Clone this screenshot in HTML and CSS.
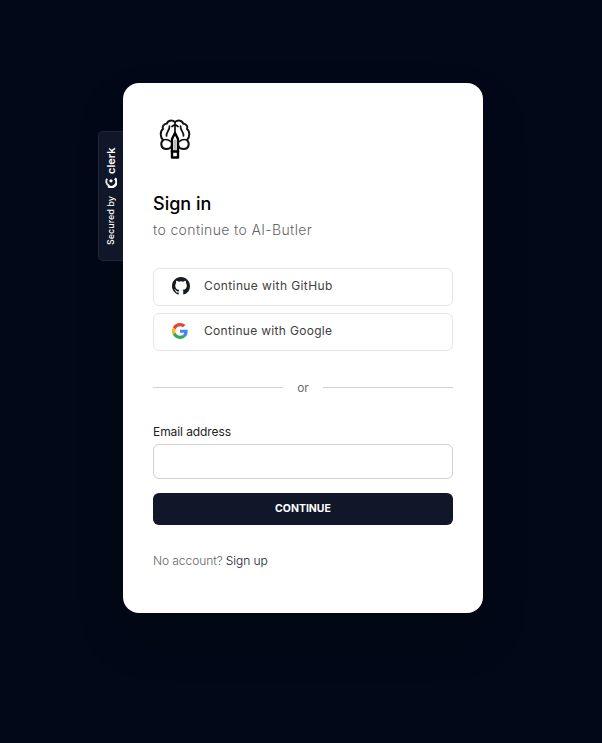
FILE: index.html
```html
<!DOCTYPE html>
<html lang="en">
<head>
<meta charset="utf-8">
<title>Sign in</title>
<link rel="stylesheet" href="styles.css">
</head>
<body>
<main class="card">
  <div class="badge">
    <span class="badge-label">Secured by</span>
    <svg class="badge-mark" viewBox="0 0 24 26" aria-hidden="true">
      <path d="M19 4.500A11 11 0 0 0 4 8.500" fill="none" stroke="#dfe1e6" stroke-width="4.500"/>
      <path d="M3.500 7A11 11 0 0 0 20 21.500" fill="none" stroke="#fff" stroke-width="5.500"/>
      <circle cx="14.500" cy="13" r="3.500" fill="#fff"/>
    </svg>
    <span class="badge-name">clerk</span>
  </div>
  <svg class="logo" viewBox="0 0 44 44" fill="none" stroke="#111" stroke-width="2" stroke-linecap="round" stroke-linejoin="round" aria-hidden="true">
    <path d="M22 4C19 1.500 14.500 2.500 14 5.500C10 6 9 9 10 11C7 13 7 19 10 22C7 25 8 31 13 31C16 31 18 30 18.500 28"/>
    <path d="M22 4C25 1.500 29.500 2.500 30 5.500C34 6 35 9 34 11C37 13 37 19 34 22C37 25 36 31 31 31C28 31 26 30 25.500 28"/>
    <path d="M22 5V16M22 6.500L19 8.500M22 6.500L25 8.500" stroke-width="1.700"/>
    <path d="M16.500 8C17 12 13 14 13.500 18M27.500 8C27 12 31 14 30.500 18M10 22C13 21 15.500 21.500 17.500 23.500M34 22C31 21 28.500 21.500 26.500 23.500" stroke-width="1.700"/>
    <path d="M19 21L22 15L25 21V39.500H19Z" fill="#fff" stroke="#000" stroke-width="2.400"/>
    <path d="M22 22V32" stroke="#777" stroke-width="1"/>
    <path d="M19 33.500H25" stroke="#000" stroke-width="2.400"/>
  </svg>
  <h1>Sign in</h1>
  <p class="subtitle">to continue to AI-Butler</p>
  <div class="providers">
    <button class="provider">
      <svg class="github" viewBox="0 0 16 16" fill="#161b22" aria-hidden="true"><path d="M8 0C3.580 0 0 3.580 0 8c0 3.540 2.290 6.530 5.470 7.590.4.070.55-.17.55-.38 0-.19-.01-.82-.01-1.490-2.010.37-2.530-.49-2.690-.94-.09-.23-.48-.94-.82-1.130-.28-.15-.68-.52-.01-.53.63-.01 1.080.58 1.230.82.72 1.210 1.870.87 2.330.66.07-.52.28-.87.51-1.070-1.780-.2-3.640-.89-3.640-3.950 0-.87.31-1.590.82-2.150-.08-.2-.36-1.020.08-2.120 0 0 .67-.21 2.200.82a7.500 7.500 0 0 1 4 0c1.530-1.040 2.200-.82 2.200-.82.44 1.100.16 1.920.08 2.120.51.56.82 1.270.82 2.150 0 3.070-1.870 3.750-3.650 3.950.29.25.54.73.54 1.480 0 1.070-.01 1.930-.01 2.200 0 .21.15.46.55.38A8 8 0 0 0 16 8c0-4.420-3.580-8-8-8z"/></svg>
      <span>Continue with GitHub</span>
    </button>
    <button class="provider">
      <svg class="google" viewBox="0 0 48 48" aria-hidden="true"><path fill="#ea4335" d="M24 9.500c3.540 0 6.710 1.220 9.210 3.600l6.850-6.850C35.900 2.380 30.470 0 24 0 14.620 0 6.510 5.380 2.560 13.220l7.980 6.190C12.430 13.720 17.740 9.500 24 9.500z"/><path fill="#4285f4" d="M46.980 24.550c0-1.570-.15-3.090-.38-4.550H24v9.020h12.940c-.58 2.960-2.260 5.480-4.780 7.180l7.730 6c4.510-4.180 7.090-10.360 7.090-17.650z"/><path fill="#fbbc05" d="M10.530 28.590A14.500 14.500 0 0 1 10.530 19.410l-7.980-6.190a24 24 0 0 0 0 21.560z"/><path fill="#34a853" d="M24 48c6.480 0 11.930-2.130 15.890-5.810l-7.730-6c-2.150 1.450-4.920 2.300-8.160 2.300-6.260 0-11.570-4.220-13.470-9.910l-7.980 6.190C6.510 42.620 14.620 48 24 48z"/></svg>
      <span class="google-text">Continue with Google</span>
    </button>
  </div>
  <div class="divider"><span>or</span></div>
  <label for="email">Email address</label>
  <input id="email" type="email">
  <button class="submit">CONTINUE</button>
  <p class="footer">No account? <a>Sign up</a></p>
</main>
</body>
</html>
```
FILE: styles.css
```css
* { box-sizing: border-box; }
body {
  margin: 0;
  min-height: 743px;
  padding-top: 83px;
  background: #020817;
  font-family: Inter, "Liberation Sans", sans-serif;
}
.card {
  position: relative;
  width: 360px;
  height: 530px;
  margin-left: 123px;
  padding: 35px 30px 0;
  border-radius: 16px;
  background: #fff;
  box-shadow: 0 24px 48px rgba(0, 0, 0, .16);
}
.badge {
  position: absolute;
  right: 100%;
  top: 48px;
  width: 25px;
  height: 130px;
  display: flex;
  align-items: center;
  padding-top: 15px;
  border: 1px solid #1f2637;
  border-left: 0;
  border-radius: 0 5px 5px 0;
  background: #101729;
  color: #fff;
  writing-mode: vertical-rl;
  transform: rotate(180deg);
  line-height: 14px;
  white-space: nowrap;
}
.badge-label {
  font-size: 9px;
  font-weight: 500;
}
.badge-mark {
  width: 12px;
  height: 12px;
  margin-top: 8px;
  transform: rotate(90deg);
}
.badge-name {
  margin-top: 2px;
  font-size: 11px;
  font-weight: 600;
}
.logo { display: block; width: 44px; height: 44px; }
h1 {
  margin: 29px 0 0;
  font-size: 18px;
  font-weight: 500;
  line-height: 26px;
  color: #000;
}
.subtitle {
  margin: 3px 0 0;
  font-size: 14px;
  line-height: 20px;
  letter-spacing: .37px;
  font-weight: 300;
  color: #666;
}
.providers { display: grid; gap: 7px; margin-top: 28px; }
button { font-family: inherit; }
.provider {
  display: flex;
  align-items: center;
  height: 38px;
  padding: 0 18px 2px;
  border: 1px solid #e6e6e6;
  border-radius: 6px;
  background: #fff;
  color: #404040;
  font-size: 12px;
  letter-spacing: .4px;
}
.provider span { padding-bottom: 2px; }
.google-text { letter-spacing: .31px; }
.github { width: 18px; height: 18px; margin-right: 14px; }
.google { width: 16px; height: 16px; margin-right: 16px; }
.divider {
  display: flex;
  align-items: center;
  gap: 14px;
  height: 20px;
  margin-top: 26px;
  font-size: 12px;
  color: #707070;
}
.divider::before, .divider::after {
  content: "";
  flex: 1;
  height: 1px;
  background: #d0d0d0;
}
label {
  display: block;
  margin-top: 27px;
  font-size: 12px;
  line-height: 16px;
  letter-spacing: -.08px;
  color: #222;
}
input {
  display: block;
  width: 100%;
  height: 35px;
  margin-top: 4px;
  border: 1px solid #d0d0d0;
  border-radius: 6px;
  background: #fff;
}
.submit {
  display: block;
  width: 100%;
  height: 32px;
  margin-top: 14px;
  padding: 0 0 1px;
  border: 0;
  border-radius: 6px;
  background: #101729;
  color: #fff;
  font-size: 10.500px;
  font-weight: 700;
}
.footer {
  margin: 28px 0 0;
  font-size: 12px;
  line-height: 16px;
  letter-spacing: -.08px;
  font-weight: 300;
  color: #666;
}
.footer a { color: #0f172a; }
```
